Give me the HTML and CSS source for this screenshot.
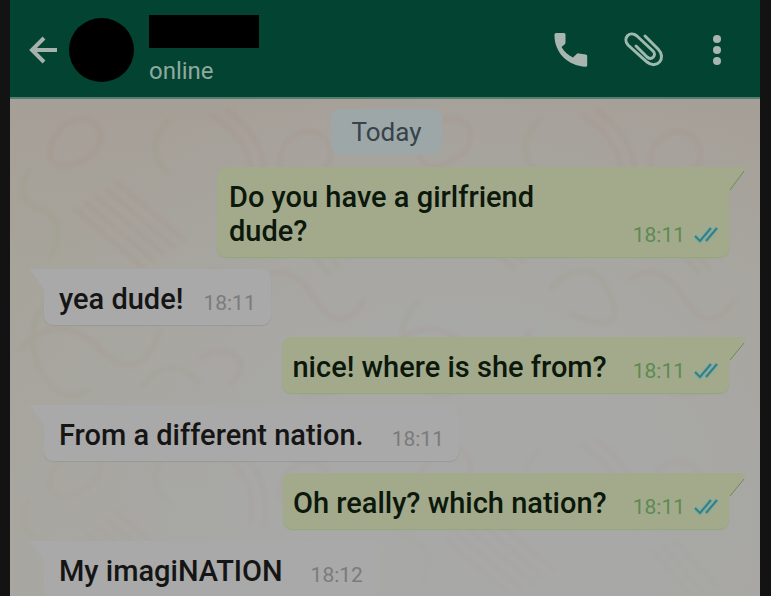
FILE: index.html
```html
<!DOCTYPE html>
<html lang="en">
<head>
<meta charset="utf-8">
<title>Chat</title>
<link rel="stylesheet" href="styles.css">
</head>
<body>
<svg class="defs" aria-hidden="true">
  <symbol id="ticks" viewBox="0 0 26 18">
    <path class="tick-glow" d="M2 10l5 5L18 2M13 15L24 2"/>
    <path class="tick-line" d="M2 10l5 5L18 2M13 15L24 2"/>
  </symbol>
</svg>
<div class="phone">
  <header class="bar">
    <button class="icon back" aria-label="Back"><svg width="30" height="30" viewBox="0 0 30 30"><path class="line" d="M29 15H4M16 3L4 15l12 12"/></svg></button>
    <div class="avatar"></div>
    <div class="contact">
      <div class="name"></div>
      <div class="status">online</div>
    </div>
    <nav class="actions">
      <button class="icon" aria-label="Call"><svg width="36" height="36" viewBox="0 0 36 36"><path class="solid" d="M3 1h8q1.500 0 1.500 1.500v8q0 1-1 2l-3 2.500c3 5 6.500 8 11.500 10.500l3.600-3.600q1-1 2.200-.5l6.900 1q1.500 0 1.500 1.500v9.300q0 1.500-1.500 1.500C14.500 34 1 20 1.500 2.500Q1.500 1 3 1z"/></svg></button>
      <button class="icon" aria-label="Attach"><svg width="42" height="38" viewBox="0 0 42 38"><path class="clip" d="M22 5l13 13c9 9-1 21-11 13L5 14C-1 7 7-1 14 5l16 15c4 4-1 10-6 6L13 15"/></svg></button>
      <button class="icon more" aria-label="More options"><svg width="12" height="34" viewBox="0 0 12 34"><g class="solid"><circle cx="6" cy="6" r="4"/><circle cx="6" cy="17" r="4"/><circle cx="6" cy="28" r="4"/></g></svg></button>
    </nav>
  </header>
  <main class="chat">
    <svg class="wallpaper" aria-hidden="true">
      <defs>
        <pattern id="doodles" width="370" height="330" patternUnits="userSpaceOnUse">
          <g fill="none" stroke-width="3">
            <path stroke="#a47468" d="M50 30c30-30 60 10 25 30s-45-5-25-30M65 110l70 60M75 103l70 60M85 96l70 60M95 89l70 60M105 82l70 60M200 15q50 30 40 80M215 10q50 35 38 90M280 40c30-25 60 20 25 35s-45-15-25-35M10 250q40-40 80 0t60-20M250 180q30-20 55 20t50 0M190 260c20-20 60 0 30 25"/>
            <path stroke="#86905c" d="M20 70q-20 30 10 40t10 50M160 20q-30 30 0 55M170 190q40-40 60 5t-40 20M270 120l50 55M282 115l48 55M294 110l45 50M40 200q-30 30-10 70t50 20M130 290q30-40 60-5M290 250q40-20 50 15t-50 30"/>
          </g>
        </pattern>
      </defs>
      <rect width="100%" height="100%" fill="url(#doodles)"/>
    </svg>
    <div class="day">Today</div>
    <article class="msg out first">
      <svg class="tail" width="18" height="26" viewBox="0 0 18 26"><path class="tail-out" d="M0 0h15q2 0 1 3L2 24H0z"/><path class="tail-edge" d="M15 4L1 23"/></svg>
      <p>Do you have a girlfriend dude?</p>
      <div class="meta"><time>18:11</time><svg class="ticks" role="img" aria-label="Read"><use href="#ticks"/></svg></div>
    </article>
    <article class="msg in">
      <svg class="tail" width="14" height="20" viewBox="0 0 14 20"><path class="tail-in" d="M14 0H2Q0 0 1 2l13 18z"/></svg>
      <p>yea dude!</p>
      <div class="meta"><time>18:11</time></div>
    </article>
    <article class="msg out">
      <svg class="tail" width="18" height="26" viewBox="0 0 18 26"><path class="tail-out" d="M0 0h15q2 0 1 3L2 24H0z"/><path class="tail-edge" d="M15 6L1 23"/></svg>
      <p>nice! where is she from?</p>
      <div class="meta"><time>18:11</time><svg class="ticks" role="img" aria-label="Read"><use href="#ticks"/></svg></div>
    </article>
    <article class="msg in long">
      <svg class="tail" width="14" height="20" viewBox="0 0 14 20"><path class="tail-in" d="M14 0H2Q0 0 1 2l13 18z"/></svg>
      <p>From a different nation.</p>
      <div class="meta"><time>18:11</time></div>
    </article>
    <article class="msg out">
      <svg class="tail" width="18" height="26" viewBox="0 0 18 26"><path class="tail-out" d="M0 0h15q2 0 1 3L2 24H0z"/><path class="tail-edge" d="M15 6L1 23"/></svg>
      <p>Oh really? which nation?</p>
      <div class="meta"><time>18:11</time><svg class="ticks" role="img" aria-label="Read"><use href="#ticks"/></svg></div>
    </article>
    <article class="msg in long last">
      <svg class="tail" width="14" height="20" viewBox="0 0 14 20"><path class="tail-in" d="M14 0H2Q0 0 1 2l13 18z"/></svg>
      <p>My imagiNATION</p>
      <div class="meta"><time>18:12</time></div>
    </article>
  </main>
</div>
</body>
</html>
```
FILE: styles.css
```css
* { box-sizing: border-box; }
body {
  margin: 0;
  height: 100vh;
  overflow: hidden;
  background: #131313;
  font-family: Roboto, "Liberation Sans", sans-serif;
}
.defs { position: absolute; width: 0; height: 0; }
.phone {
  height: 100%;
  margin: 0 11px 0 10px;
  display: flex;
  flex-direction: column;
}
.bar {
  display: flex;
  align-items: center;
  padding: 15px 37px 13px 18px;
  background: #024431;
  border-bottom: 2px solid #54806f;
}
.icon { display: block; padding: 0; border: 0; background: none; }
.icon svg { display: block; }
.line { fill: none; stroke: #a6b3ad; stroke-width: 4; }
.solid { fill: #a9b5b0; }
.clip { fill: none; stroke: #9fb9af; stroke-width: 3; stroke-linecap: round; }
.avatar {
  width: 65px;
  height: 64px;
  margin-left: 11px;
  border-radius: 50%;
  background: #000;
}
.contact { margin-left: 15px; }
.name { width: 110px; height: 33px; background: #000; }
.status {
  margin-top: 10px;
  font-size: 24px;
  line-height: 26px;
  color: #8fa9a0;
}
.actions {
  display: flex;
  align-items: center;
  gap: 34px;
  margin-left: auto;
}
.more { margin-left: 12px; }
.chat {
  position: relative;
  isolation: isolate;
  flex: 1;
  min-height: 0;
  overflow: hidden;
  display: flex;
  flex-direction: column;
  gap: 12px;
  padding: 10px 31px 0 34px;
  background:
    radial-gradient(ellipse at 60% 85%, #a8a8a6 30%, transparent 80%),
    linear-gradient(#a69f97, #a7a49b 35%, #a8a69f);
}
.wallpaper {
  position: absolute;
  inset: 0;
  z-index: -1;
  width: 100%;
  height: 100%;
  opacity: 0.16;
  filter: blur(2px);
  -webkit-mask-image: linear-gradient(#000 40%, #0004);
  mask-image: linear-gradient(#000 40%, #0004);
}
.day {
  align-self: center;
  flex: none;
  padding: 8px 20px;
  border-radius: 9px;
  background: #9ea7a7;
  color: #35434b;
  font-size: 26px;
  line-height: 30px;
}
.msg {
  position: relative;
  flex: none;
  display: flex;
  align-items: flex-end;
  justify-content: space-between;
  gap: 20px;
  padding: 13px 15px 9px;
  border-radius: 9px;
  font-size: 29px;
  font-weight: 500;
  line-height: 34px;
  color: #151515;
}
.msg p { margin: 0; }
.out {
  align-self: flex-end;
  gap: 26px;
  padding: 13px 10px 9px;
  border-top-right-radius: 0;
  background: #a3aa8c;
  box-shadow: 0 1px 1px #91a87b;
  color: #0b180b;
}
.first { width: 512px; max-width: 100%; padding-left: 12px; }
.first p { max-width: 330px; }
.in {
  align-self: flex-start;
  border-top-left-radius: 0;
  background: #a9a9a9;
  box-shadow: 0 1px 1px #9a9a97;
}
.long { gap: 28px; }
.last { box-shadow: none; }
.meta {
  display: flex;
  align-items: center;
  gap: 8px;
  font-size: 21px;
  font-weight: 400;
  line-height: 26px;
  color: #7b7b7b;
}
.out .meta { color: #5c8a51; }
.ticks { width: 26px; height: 18px; }
.tick-glow { fill: none; stroke: #77aba5; stroke-width: 5; opacity: 0.6; }
.tick-line { fill: none; stroke: #327f88; stroke-width: 2; }
.tail { position: absolute; top: 0; }
.out .tail { left: 100%; }
.in .tail { right: 100%; }
.tail-out { fill: #a3aa8c; }
.tail-edge { fill: none; stroke: #71875f; stroke-width: 1; }
.tail-in { fill: #a9a9a9; }
```
